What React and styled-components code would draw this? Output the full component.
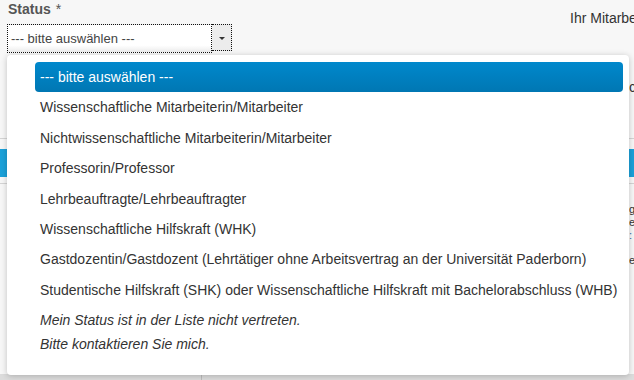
import React from 'react';
import styled, { createGlobalStyle } from 'styled-components';

const GlobalStyle = createGlobalStyle`
  html, body {
    margin: 0;
    padding: 0;
    background: #f7f7f7;
  }
  body {
    font-family: "Liberation Sans", Arial, sans-serif;
    color: #333;
  }
`;

const Page = styled.div`
  position: relative;
  width: 634px;
  height: 380px;
  overflow: hidden;
  background: #f7f7f7;
`;

const Header = styled.div`
  display: grid;
  grid-template-columns: 563px 1fr;
  padding-left: 7px;
`;

const FieldColumn = styled.div`
  display: flex;
  flex-direction: column;
`;

const Label = styled.label`
  font-size: 14px;
  font-weight: bold;
  line-height: 18px;
  color: #555;
  padding-left: 1px;
`;

const Req = styled.span`
  font-weight: normal;
  margin-left: 5px;
`;

const SelectBox = styled.div`
  display: flex;
  margin-top: 6px;
  width: 225px;
  height: 29px;
`;

const SelectValue = styled.div`
  flex: 1;
  box-sizing: border-box;
  border: 1px dotted #111;
  background: linear-gradient(#fff 0, #fff 75%, #ececec 100%);
  font-size: 13px;
  line-height: 27px;
  padding-left: 3px;
  color: #444;
`;

const SelectButton = styled.div`
  width: 20px;
  height: 27px;
  box-sizing: border-box;
  border: 1px dotted #111;
  border-left: none;
  background: #ececec;
  display: flex;
  align-items: center;
  justify-content: center;
`;

const Caret = styled.span`
  width: 0;
  height: 0;
  border-left: 3px solid transparent;
  border-right: 3px solid transparent;
  border-top: 3px solid #333;
  margin-top: 2px;
`;

const Info = styled.div`
  font-size: 14px;
  line-height: 18px;
  padding-top: 9px;
  white-space: nowrap;
`;

const Body = styled.div`
  display: flex;
  flex-direction: column;
`;

const Intro = styled.div`
  height: 85px;
  padding-left: 629px;
  font-size: 14px;
  line-height: 18px;
  padding-top: 25px;
  box-sizing: border-box;
  white-space: nowrap;
`;

const Rule = styled.div`
  height: 1px;
  background: #d4d4d4;
`;

const TabBar = styled.div`
  height: 28px;
  margin: 10px 0 6px;
  background: #1ba1d9;
`;

const Details = styled.div`
  height: 190px;
  box-sizing: border-box;
  padding: 19px 0 0 629px;
  font-size: 11px;
  line-height: 13px;
  white-space: nowrap;
`;

const DetailLine = styled.div`
  color: ${(p) => (p.link ? '#2a6fb0' : '#333')};
  margin-bottom: ${(p) => p.gap || 0}px;
`;

const Footer = styled.div`
  display: grid;
  grid-template-columns: 202px 1fr;
  height: 6px;
  background: #dcdcdc;
`;

const FooterCell = styled.div`
  border-right: 1px solid #bdbdbd;
`;

const Dropdown = styled.ul`
  position: absolute;
  left: 7px;
  top: 55px;
  width: 622px;
  height: 320px;
  box-sizing: border-box;
  margin: 0;
  padding: 7px 6px 0 28px;
  list-style: none;
  background: #fff;
  border-radius: 4px;
  box-shadow: 0 1px 6px rgba(0, 0, 0, 0.22);
`;

const Option = styled.li`
  height: 30.4px;
  padding-left: 5px;
  font-size: 14px;
  line-height: 30px;
  white-space: nowrap;
  border-radius: 4px;
  color: ${(p) => (p.active ? '#fff' : '#333')};
  background: ${(p) => (p.active ? 'linear-gradient(#0088cc, #0077b3)' : 'transparent')};
`;

const Note = styled.li`
  padding: 3px 0 0 5px;
  font-size: 14px;
  line-height: 24px;
  font-style: italic;
  color: #333;
`;

const options = [
  '--- bitte auswählen ---',
  'Wissenschaftliche Mitarbeiterin/Mitarbeiter',
  'Nichtwissenschaftliche Mitarbeiterin/Mitarbeiter',
  'Professorin/Professor',
  'Lehrbeauftragte/Lehrbeauftragter',
  'Wissenschaftliche Hilfskraft (WHK)',
  'Gastdozentin/Gastdozent (Lehrtätiger ohne Arbeitsvertrag an der Universität Paderborn)',
  'Studentische Hilfskraft (SHK) oder Wissenschaftliche Hilfskraft mit Bachelorabschluss (WHB)',
];

const App = () => (
  <Page>
    <GlobalStyle />
    <Header>
      <FieldColumn>
        <Label>
          Status<Req>*</Req>
        </Label>
        <SelectBox>
          <SelectValue>--- bitte auswählen ---</SelectValue>
          <SelectButton>
            <Caret />
          </SelectButton>
        </SelectBox>
      </FieldColumn>
      <Info>Ihr Mitarbeiterstatus</Info>
    </Header>
    <Body>
      <Intro>chen</Intro>
      <Rule />
      <TabBar />
      <Rule />
      <Details>
        <DetailLine>g</DetailLine>
        <DetailLine>e</DetailLine>
        <DetailLine link gap={12}>:</DetailLine>
        <DetailLine>e</DetailLine>
      </Details>
      <Footer>
        <FooterCell />
        <div />
      </Footer>
    </Body>
    <Dropdown>
      {options.map((o, i) => (
        <Option key={o} active={i === 0}>
          {o}
        </Option>
      ))}
      <Note>
        Mein Status ist in der Liste nicht vertreten.
        <br />
        Bitte kontaktieren Sie mich.
      </Note>
    </Dropdown>
  </Page>
);

export default App;
